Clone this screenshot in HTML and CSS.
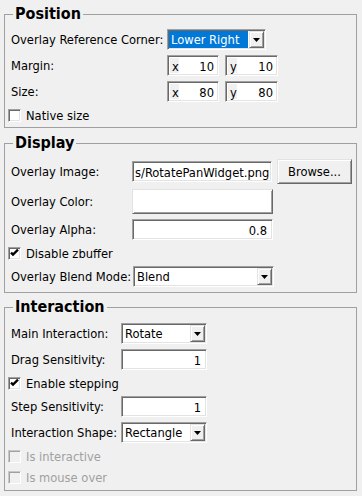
FILE: index.html
```html
<!DOCTYPE html>
<html>
<head>
<meta charset="utf-8">
<link rel="stylesheet" href="styles.css">
</head>
<body>
<fieldset class="group g-pos">
  <legend>Position</legend>
  <div class="rows">
    <div class="row">
      <span class="lbl">Overlay Reference Corner:</span>
      <div class="combo w-corner"><span class="val sel">Lower Right</span><span class="arrow"><svg width="7" height="4" viewBox="0 0 7 4"><path d="M0 0h7L3.5 4z" fill="#000"/></svg></span></div>
    </div>
    <div class="row">
      <span class="lbl">Margin:</span>
      <div class="spin w-sx"><span class="pre">x</span><span class="num">10</span></div>
      <div class="spin w-sy"><span class="pre">y</span><span class="num">10</span></div>
    </div>
    <div class="row">
      <span class="lbl">Size:</span>
      <div class="spin w-sx"><span class="pre">x</span><span class="num">80</span></div>
      <div class="spin w-sy"><span class="pre">y</span><span class="num">80</span></div>
    </div>
    <div class="row cbrow">
      <span class="cb"></span><span class="cbtext">Native size</span>
    </div>
  </div>
</fieldset>

<fieldset class="group g-disp">
  <legend>Display</legend>
  <div class="rows">
    <div class="row tall">
      <span class="lbl">Overlay Image:</span>
      <div class="edit w-img">s/RotatePanWidget.png</div>
      <div class="btn w-browse">Browse...</div>
    </div>
    <div class="row tall">
      <span class="lbl">Overlay Color:</span>
      <div class="btn color w-color"></div>
    </div>
    <div class="row">
      <span class="lbl">Overlay Alpha:</span>
      <div class="edit num-edit w-alpha">0.8</div>
    </div>
    <div class="row cbrow">
      <span class="cb"><svg width="9" height="9" viewBox="0 0 9 9"><path d="M1 3.6l2 2 5-5" fill="none" stroke="#000" stroke-width="2.3"/></svg></span><span class="cbtext">Disable zbuffer</span>
    </div>
    <div class="row">
      <span class="lbl">Overlay Blend Mode:</span>
      <div class="combo w-blend"><span class="val">Blend</span><span class="arrow"><svg width="7" height="4" viewBox="0 0 7 4"><path d="M0 0h7L3.5 4z" fill="#000"/></svg></span></div>
    </div>
  </div>
</fieldset>

<fieldset class="group g-int">
  <legend>Interaction</legend>
  <div class="rows">
    <div class="row">
      <span class="lbl">Main Interaction:</span>
      <div class="combo w-int"><span class="val">Rotate</span><span class="arrow"><svg width="7" height="4" viewBox="0 0 7 4"><path d="M0 0h7L3.5 4z" fill="#000"/></svg></span></div>
    </div>
    <div class="row">
      <span class="lbl">Drag Sensitivity:</span>
      <div class="edit num-edit w-int">1</div>
    </div>
    <div class="row cbrow">
      <span class="cb"><svg width="9" height="9" viewBox="0 0 9 9"><path d="M1 3.6l2 2 5-5" fill="none" stroke="#000" stroke-width="2.3"/></svg></span><span class="cbtext">Enable stepping</span>
    </div>
    <div class="row">
      <span class="lbl">Step Sensitivity:</span>
      <div class="edit num-edit w-int">1</div>
    </div>
    <div class="row">
      <span class="lbl">Interaction Shape:</span>
      <div class="combo w-int"><span class="val">Rectangle</span><span class="arrow"><svg width="7" height="4" viewBox="0 0 7 4"><path d="M0 0h7L3.5 4z" fill="#000"/></svg></span></div>
    </div>
    <div class="row cbrow disabled">
      <span class="cb"></span><span class="cbtext">Is interactive</span>
    </div>
    <div class="row cbrow disabled">
      <span class="cb"></span><span class="cbtext">Is mouse over</span>
    </div>
  </div>
</fieldset>
</body>
</html>
```
FILE: styles.css
```css
* { box-sizing: border-box; }

html, body {
  margin: 0;
  background: #f0f0f0;
}

body {
  padding-top: 5px;
  width: 362px;
  height: 496px;
  overflow: hidden;
  font-family: "DejaVu Sans Condensed", "DejaVu Sans", sans-serif;
  font-size: 12.8px;
  color: #000;
}

.group {
  margin: 0 5px 0 4px;
  padding: 6px 3px 4px;
  border: 1px solid #a0a0a0;
  min-width: 0;
}

.g-disp { margin-top: 6px; padding-top: 7px; padding-bottom: 5px; }
.g-int { margin-top: 5px; padding-top: 7px; padding-bottom: 5px; }

.group legend {
  font-weight: bold;
  font-size: 16px;
  line-height: 18px;
  padding: 0 2px;
  margin-left: 5px;
}

.rows {
  display: flex;
  flex-direction: column;
  gap: 5px;
}

.row {
  display: flex;
  align-items: center;
  height: 21px;
  white-space: nowrap;
}
.row.tall { height: 25px; }
.row.cbrow { height: 16px; }

.lbl { flex: none; padding-left: 3px; }
.g-pos .lbl { width: 159px; }
.g-disp .lbl { width: 124px; }
.g-int .lbl { width: 113px; }

/* sunken frame */
.combo, .spin, .edit, .cb {
  border: 1px solid;
  border-color: #a0a0a0 #ffffff #ffffff #a0a0a0;
  box-shadow: inset 1px 1px 0 #696969, inset -1px -1px 0 #e3e3e3;
  background: #fff;
}

/* raised frame */
.btn, .arrow {
  border: 1px solid;
  border-color: #e3e3e3 #696969 #696969 #e3e3e3;
  box-shadow: inset 1px 1px 0 #ffffff, inset -1px -1px 0 #a0a0a0;
  background: #f0f0f0;
}

.combo {
  height: 21px;
  display: flex;
  padding: 1px;
}
.combo .val {
  flex: 1;
  padding-left: 2px;
  line-height: 17px;
  overflow: hidden;
}
.combo .val.sel {
  background: #0078d7;
  color: #fff;
  margin-right: 1px;
}
.combo .arrow {
  flex: none;
  width: 15px;
  display: flex;
  align-items: center;
  justify-content: center;
}
.combo .arrow svg { display: block; }

.w-corner { width: 99px; }
.w-blend { width: 141px; margin-left: 1px; }
.w-int { width: 86px; }

.spin {
  height: 21px;
  display: flex;
  padding: 2px;
  line-height: 17px;
}
.spin .pre {
  flex: none;
  width: 9px;
  padding-left: 2px;
  background: #f0f0f0;
}
.spin .num {
  flex: 1;
  text-align: right;
  padding-right: 2px;
}
.w-sx { width: 52px; }
.w-sy { width: 53px; margin-left: 6px; }

.edit {
  height: 21px;
  padding: 2px 3px 2px 2px;
  line-height: 17px;
  overflow: hidden;
}
.num-edit { text-align: right; padding-right: 5px; }
.w-img { width: 140px; }
.w-alpha { width: 141px; }

.btn {
  height: 25px;
  display: flex;
  align-items: center;
  justify-content: center;
}
.w-browse { width: 75px; margin-left: 5px; }
.btn.color { background: #fff; }
.w-color { width: 141px; }

.cb {
  flex: none;
  width: 13px;
  height: 13px;
  display: flex;
  align-items: center;
  justify-content: center;
}
.cb svg { display: block; }
.cbtext { margin-left: 5px; }

.disabled .cbtext { color: #a0a0a0; }
.disabled .cb {
  background: #f0f0f0;
  border-color: #c8c8c8 #ffffff #ffffff #c8c8c8;
  box-shadow: inset 1px 1px 0 #a0a0a0, inset -1px -1px 0 #f0f0f0;
}
```
